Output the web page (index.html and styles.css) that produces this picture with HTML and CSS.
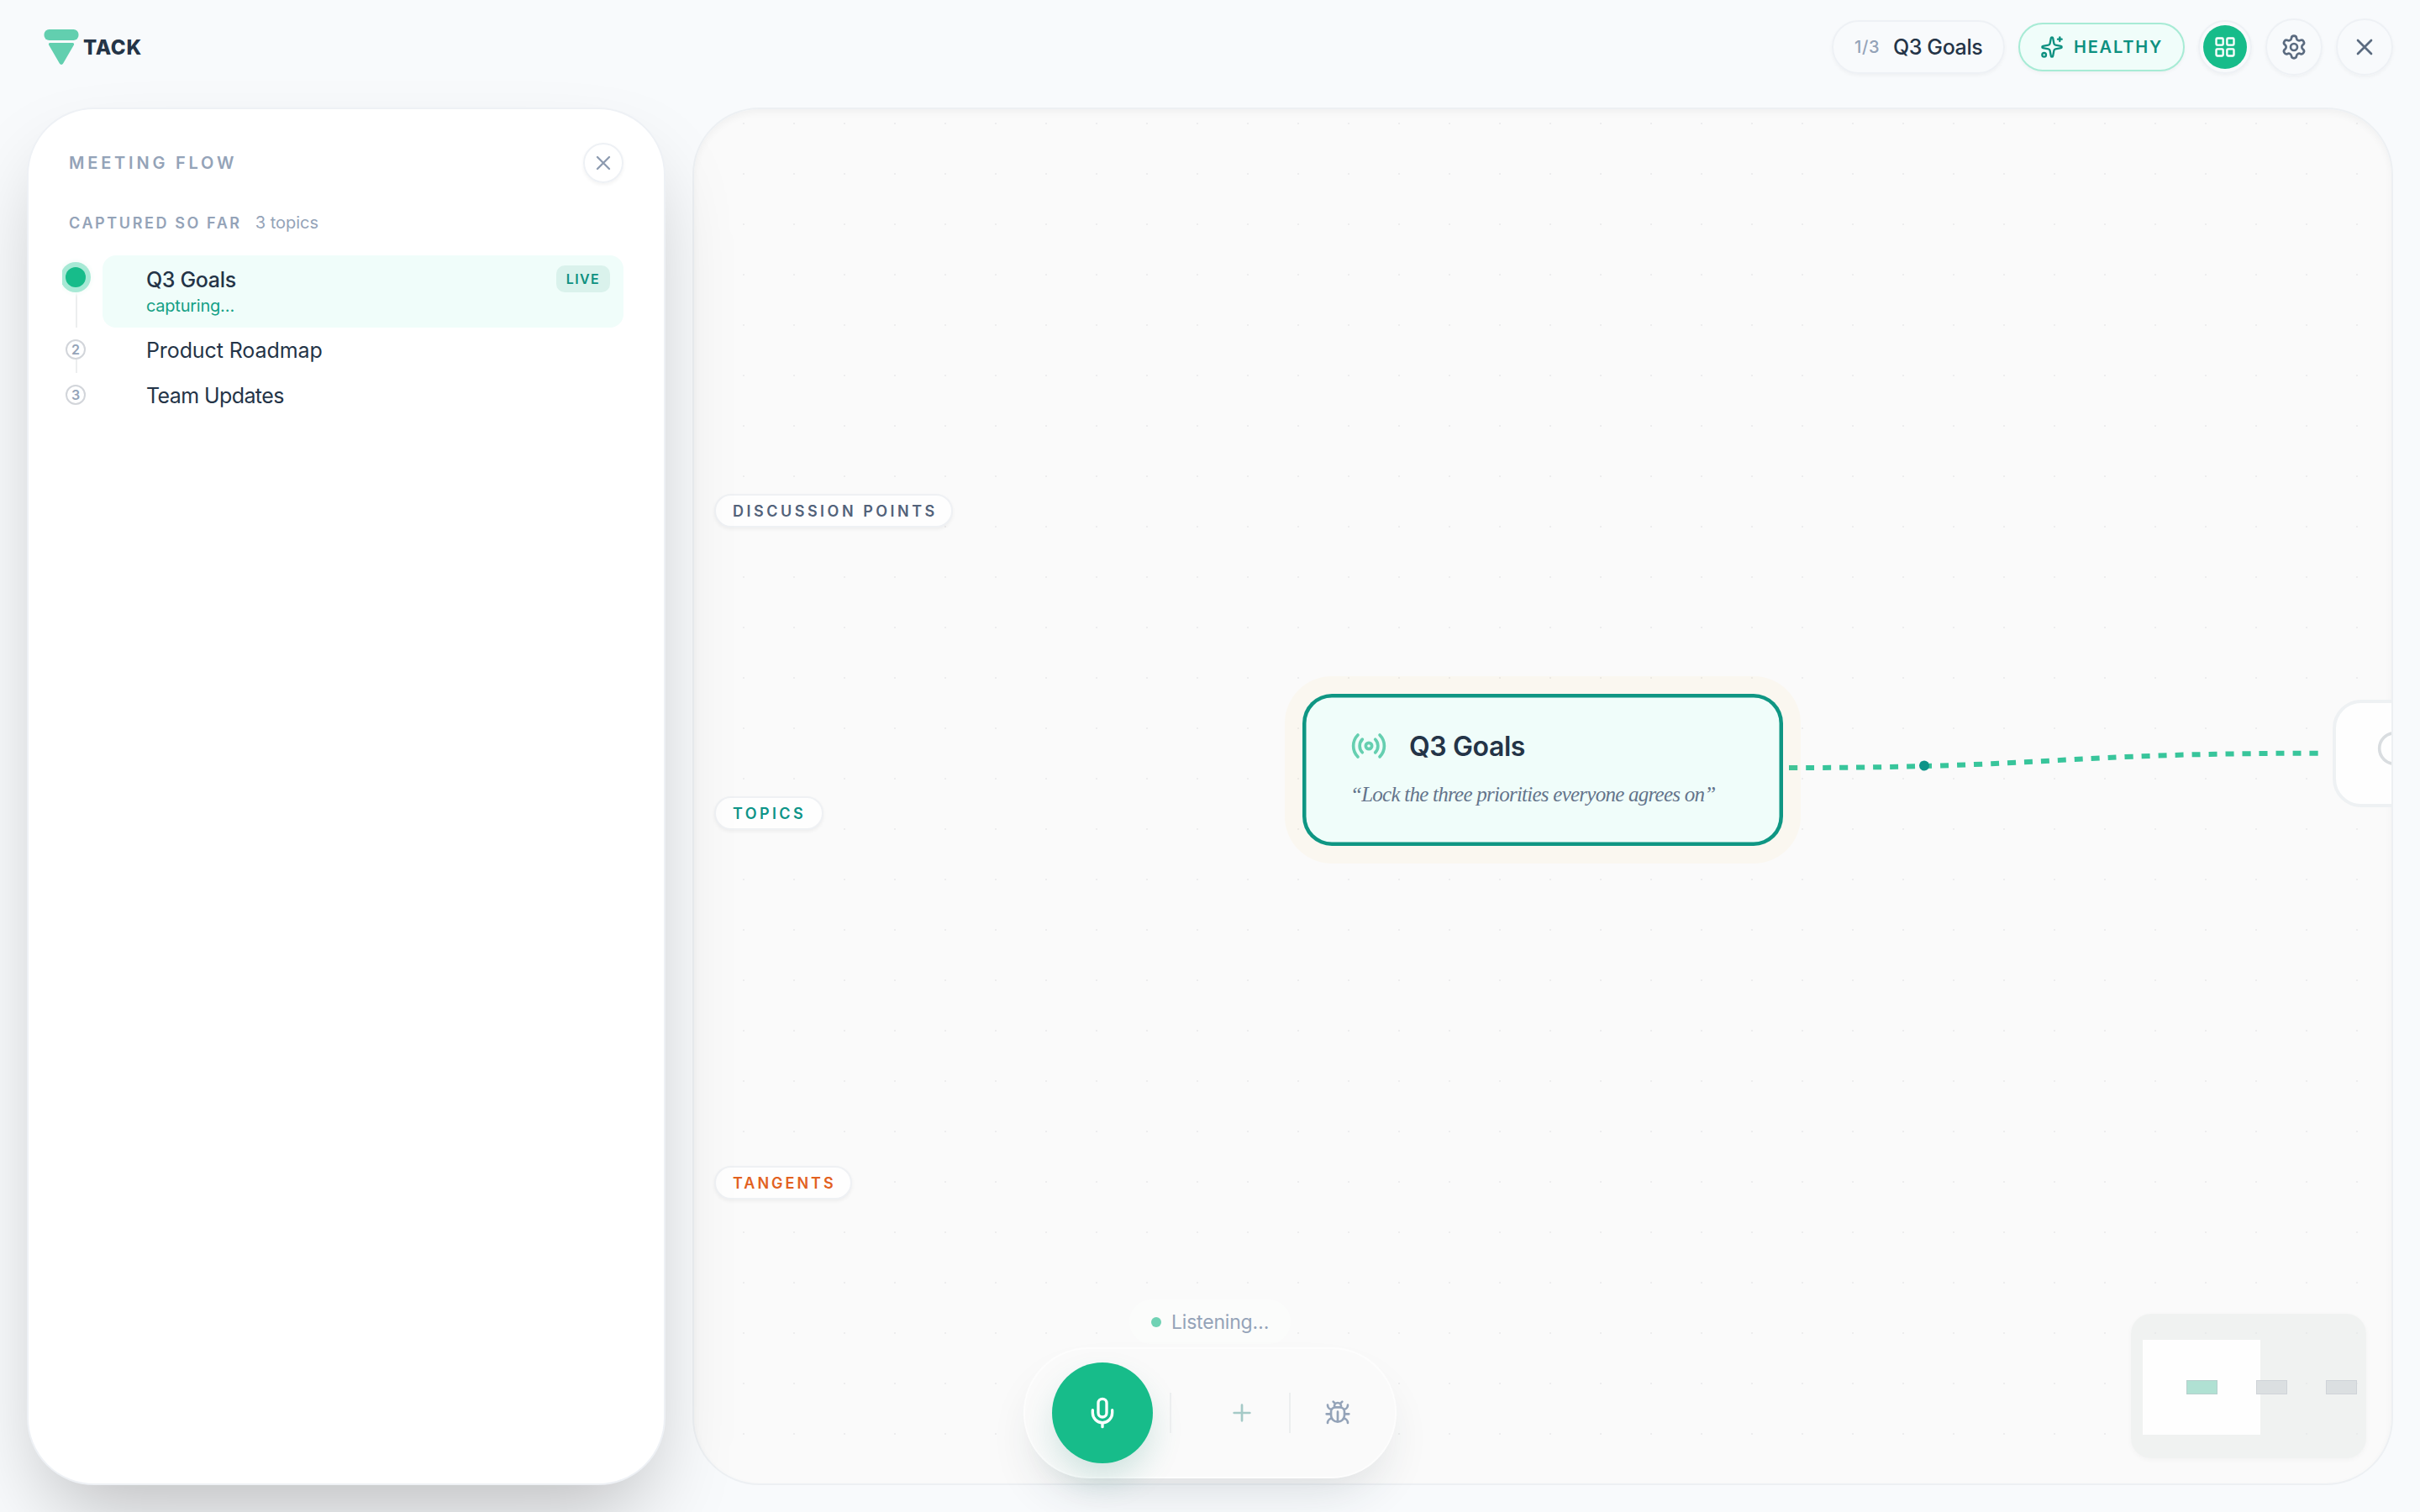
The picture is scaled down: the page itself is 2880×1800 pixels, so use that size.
FILE: index.html
```
<!DOCTYPE html>
<html lang="en">
<head>
  <meta charset="UTF-8">
  <title>Tack</title>
  <link rel="stylesheet" href="styles.css">
</head>
<body>

  <header class="topbar">
    <div class="brand">
      <svg class="brand-mark" viewBox="0 0 42 44">
        <rect x="0.5" y="1" width="41" height="13" rx="6"/>
        <path d="M7.5 17h27a1.6 1.6 0 0 1 1.4 2.4L23 41.8a2.3 2.3 0 0 1-4 0L6.1 19.4A1.6 1.6 0 0 1 7.5 17z"/>
      </svg>
      <span class="brand-name">TACK</span>
    </div>

    <div class="actions">
      <div class="topic-pill">
        <span class="topic-count">1/3</span>
        <span class="topic-name">Q3 Goals</span>
      </div>
      <div class="health-pill">
        <svg class="icon icon-health" viewBox="0 0 24 24">
          <path d="M11.017 2.814a1 1 0 0 1 1.966 0l1.051 5.558a2 2 0 0 0 1.594 1.594l5.558 1.051a1 1 0 0 1 0 1.966l-5.558 1.051a2 2 0 0 0-1.594 1.594l-1.051 5.558a1 1 0 0 1-1.966 0l-1.051-5.558a2 2 0 0 0-1.594-1.594l-5.558-1.051a1 1 0 0 1 0-1.966l5.558-1.051a2 2 0 0 0 1.594-1.594z"/>
          <path d="M20 2v4M22 4h-4"/>
          <circle cx="4" cy="20" r="2"/>
        </svg>
        <span>HEALTHY</span>
      </div>
      <div class="view-toggle">
        <button class="view-btn">
          <svg class="icon icon-grid" viewBox="0 0 24 24">
            <rect x="3" y="3" width="7" height="7" rx="1"/>
            <rect x="14" y="3" width="7" height="7" rx="1"/>
            <rect x="14" y="14" width="7" height="7" rx="1"/>
            <rect x="3" y="14" width="7" height="7" rx="1"/>
          </svg>
        </button>
      </div>
      <button class="round-btn">
        <svg class="icon icon-top" viewBox="0 0 24 24">
          <path d="M9.671 4.136a2.34 2.34 0 0 1 4.659 0 2.34 2.34 0 0 0 3.319 1.915 2.34 2.34 0 0 1 2.33 4.033 2.34 2.34 0 0 0 0 3.831 2.34 2.34 0 0 1-2.33 4.033 2.34 2.34 0 0 0-3.319 1.915 2.34 2.34 0 0 1-4.659 0 2.34 2.34 0 0 0-3.32-1.915 2.34 2.34 0 0 1-2.33-4.033 2.34 2.34 0 0 0 0-3.831A2.34 2.34 0 0 1 6.35 6.051a2.34 2.34 0 0 0 3.319-1.915"/>
          <circle cx="12" cy="12" r="3"/>
        </svg>
      </button>
      <button class="round-btn">
        <svg class="icon icon-top" viewBox="0 0 24 24"><path d="M18 6 6 18M6 6l12 12"/></svg>
      </button>
    </div>
  </header>

  <main class="workspace">
    <aside class="flow-panel">
      <div class="flow-head">
        <h2>MEETING FLOW</h2>
        <button class="flow-close">
          <svg class="icon icon-close" viewBox="0 0 24 24"><path d="M18 6 6 18M6 6l12 12"/></svg>
        </button>
      </div>
      <div class="flow-sub">
        <span class="flow-label">CAPTURED SO FAR</span>
        <span class="flow-count">3 topics</span>
      </div>
      <ol class="flow-list">
        <li class="flow-item active">
          <div class="marker"><span class="dot"></span><span class="line"></span></div>
          <div class="flow-body">
            <div class="flow-text">
              <span class="flow-title">Q3 Goals</span>
              <span class="flow-status">capturing…</span>
            </div>
            <span class="live">LIVE</span>
          </div>
        </li>
        <li class="flow-item">
          <div class="marker"><span class="dot">2</span><span class="line"></span></div>
          <div class="flow-body"><span class="flow-title roadmap">Product Roadmap</span></div>
        </li>
        <li class="flow-item">
          <div class="marker"><span class="dot">3</span></div>
          <div class="flow-body"><span class="flow-title updates">Team Updates</span></div>
        </li>
      </ol>
    </aside>

    <section class="canvas">
      <svg class="edges" viewBox="0 0 2020 1636">
        <path class="edge" d="M1303 784C1619 784 1619 766.7 1933 766.7"/>
        <circle class="edge-dot" cx="1464" cy="781.5" r="6"/>
      </svg>

      <div class="lane lane-points">DISCUSSION POINTS</div>
      <div class="lane lane-topics">TOPICS</div>
      <div class="lane lane-tangents">TANGENTS</div>

      <div class="node node-active">
        <div class="node-head">
          <svg class="icon icon-node" viewBox="0 0 24 24">
            <path d="M4.9 19.1C1 15.2 1 8.8 4.9 4.9M7.8 16.2c-2.3-2.3-2.3-6.1 0-8.5M16.2 7.8c2.3 2.3 2.3 6.1 0 8.5M19.1 4.9C23 8.8 23 15.1 19.1 19"/>
            <circle cx="12" cy="12" r="2"/>
          </svg>
          <h3>Q3 Goals</h3>
        </div>
        <p>“Lock the three priorities everyone agrees on”</p>
      </div>

      <div class="node node-next">
        <svg class="icon icon-node" viewBox="0 0 24 24"><circle cx="12" cy="12" r="10"/></svg>
      </div>

      <svg class="minimap" viewBox="0 0 280 172">
        <rect class="map-view" x="14" y="31" width="140" height="113"/>
        <rect class="map-node current" x="66.5" y="79.5" width="36" height="16"/>
        <rect class="map-node" x="149.5" y="79.5" width="36" height="16"/>
        <rect class="map-node" x="232.5" y="79.5" width="36" height="16"/>
      </svg>
    </section>
  </main>

  <div class="dock-wrap">
    <div class="listening"><span class="pulse"></span>Listening…</div>
    <div class="dock">
      <button class="mic">
        <svg class="icon icon-mic" viewBox="0 0 24 24">
          <path d="M12 19v3M19 10v2a7 7 0 0 1-14 0v-2"/>
          <rect x="9" y="2" width="6" height="13" rx="3"/>
        </svg>
      </button>
      <span class="sep"></span>
      <button class="tool tool-add">
        <svg class="icon icon-tool" viewBox="0 0 24 24"><path d="M5 12h14M12 5v14"/></svg>
      </button>
      <span class="sep"></span>
      <button class="tool tool-bug">
        <svg class="icon icon-tool" viewBox="0 0 24 24">
          <path d="M12 20v-9M14 7a4 4 0 0 1 4 4v3a6 6 0 0 1-12 0v-3a4 4 0 0 1 4-4zM14.12 3.88 16 2M21 21a4 4 0 0 0-3.81-4M21 5a4 4 0 0 1-3.55 3.97M22 13h-4M3 21a4 4 0 0 1 3.81-4M3 5a4 4 0 0 0 3.55 3.97M6 13H2M8 2l1.88 1.88M9 7.13V6a3 3 0 1 1 6 0v1.13"/>
        </svg>
      </button>
    </div>
  </div>

</body>
</html>
```
FILE: styles.css
```
* {
  box-sizing: border-box;
}

body {
  margin: 0;
  width: 2880px;
  height: 1800px;
  overflow: hidden;
  background: #f8fafc;
  color: #243447;
  font-family: Inter, "Liberation Sans", sans-serif;
}

button {
  display: flex;
  align-items: center;
  justify-content: center;
  padding: 0;
  border: none;
  background: none;
}

h2,
h3,
p {
  margin: 0;
}

.icon {
  display: block;
  flex: none;
  fill: none;
  stroke: currentColor;
  stroke-width: 2;
  stroke-linecap: round;
  stroke-linejoin: round;
}

/* top bar */

.topbar {
  display: flex;
  align-items: center;
  justify-content: space-between;
  height: 112px;
  padding: 0 32px 0 52px;
}

.brand {
  display: flex;
  align-items: center;
  gap: 5px;
}

.brand-mark {
  width: 42px;
  height: 44px;
  fill: #62cfaf;
}

.brand-name {
  font-size: 24px;
  font-weight: 800;
  letter-spacing: 0.7px;
}

.actions {
  display: flex;
  align-items: center;
  gap: 16px;
}

.topic-pill {
  display: flex;
  align-items: center;
  gap: 16px;
  width: 206px;
  height: 64px;
  padding-left: 25px;
  border: 2px solid #eef1f5;
  border-radius: 32px;
  box-shadow: 0 2px 4px rgba(0, 0, 0, 0.04);
  white-space: nowrap;
}

.topic-count {
  width: 30px;
  color: #94a3b8;
  font-size: 20px;
  font-weight: 500;
  letter-spacing: 0.6px;
}

.topic-name {
  font-size: 25px;
  font-weight: 500;
  letter-spacing: -0.4px;
}

.health-pill {
  display: flex;
  align-items: center;
  gap: 12px;
  width: 198px;
  height: 58px;
  padding-left: 24px;
  border: 2px solid #a7ebd5;
  border-radius: 29px;
  background: #f0fdfa;
  box-shadow: 0 2px 4px rgba(0, 0, 0, 0.04);
  color: #0d9080;
  font-size: 20px;
  font-weight: 600;
  letter-spacing: 1.8px;
}

.icon-health {
  width: 28px;
  height: 28px;
}

.view-toggle {
  width: 64px;
  height: 64px;
  padding: 4px;
  border: 2px solid #eef1f5;
  border-radius: 50%;
  box-shadow: 0 2px 4px rgba(0, 0, 0, 0.04);
}

.view-btn {
  width: 52px;
  height: 52px;
  border-radius: 50%;
  background: #17bc8a;
  color: #fff;
}

.icon-grid {
  width: 28px;
  height: 28px;
}

.round-btn {
  width: 68px;
  height: 68px;
  border: 2px solid #eef1f5;
  border-radius: 50%;
  box-shadow: 0 2px 4px rgba(0, 0, 0, 0.04);
  color: #5b6b80;
}

.icon-top {
  width: 32px;
  height: 32px;
}

/* workspace */

.workspace {
  display: grid;
  grid-template-columns: 760px 1fr;
  gap: 32px;
  height: 1656px;
  padding: 16px 32px 0;
}

.flow-panel {
  z-index: 1;
  padding: 40px 48px;
  border: 2px solid #eef1f5;
  border-radius: 80px;
  background: #fff;
  box-shadow: 0 50px 100px -24px rgba(0, 0, 0, 0.25);
}

.flow-head {
  display: flex;
  align-items: center;
  justify-content: space-between;
  height: 48px;
}

.flow-head h2 {
  color: #94a3b8;
  font-size: 20px;
  font-weight: 600;
  letter-spacing: 3.8px;
}

.flow-close {
  width: 48px;
  height: 48px;
  border: 2px solid #eef1f5;
  border-radius: 50%;
  box-shadow: 0 2px 4px rgba(0, 0, 0, 0.05);
  color: #8d9bb0;
}

.icon-close {
  width: 28px;
  height: 28px;
}

.flow-sub {
  display: flex;
  align-items: center;
  gap: 16px;
  height: 24px;
  margin-top: 35px;
}

.flow-label {
  color: #94a3b8;
  font-size: 18px;
  font-weight: 600;
  letter-spacing: 2.6px;
}

.flow-count {
  color: #94a3b8;
  font-size: 20px;
}

.flow-list {
  margin: 27px 0 0 -8px;
  padding: 0;
  overflow: hidden;
  list-style: none;
}

.flow-item {
  display: grid;
  grid-template-columns: 32px 1fr;
  gap: 16px;
  height: 54px;
}

.flow-item.active {
  height: 86px;
}

.marker {
  display: flex;
  flex-direction: column;
  align-items: center;
  padding-top: 14px;
}

.dot {
  z-index: 1;
  display: flex;
  align-items: center;
  justify-content: center;
  width: 24px;
  height: 24px;
  border: 2px solid #d2d5da;
  border-radius: 50%;
  color: #94a3b8;
  font-size: 16px;
  font-weight: 600;
}

.active .dot {
  border: none;
  background: #17bc8a;
  box-shadow: 0 0 0 6px #a7e9d5, 0 0 4px 9px #f8fdfb;
}

.line {
  flex: 1;
  width: 2px;
  margin-left: 2px;
  background: #eceeef;
}

.flow-body {
  display: flex;
  align-items: center;
  padding-left: 52px;
}

.active .flow-body {
  align-items: flex-start;
  justify-content: space-between;
  padding: 12px 16px 0 52px;
  border-radius: 16px;
  background: #f0fdfa;
}

.flow-text {
  display: flex;
  flex-direction: column;
}

.flow-title {
  font-size: 25px;
  line-height: 34px;
  letter-spacing: -0.2px;
}

.active .flow-title {
  font-weight: 500;
  letter-spacing: -0.35px;
}

.roadmap {
  letter-spacing: -0.1px;
}

.updates {
  letter-spacing: -0.6px;
}

.flow-status {
  color: #14a085;
  font-size: 20px;
  line-height: 29px;
  letter-spacing: -0.25px;
}

.live {
  display: flex;
  align-items: center;
  justify-content: center;
  width: 64px;
  height: 32px;
  border-radius: 10px;
  background: #daf2ec;
  color: #0d9080;
  font-size: 16px;
  font-weight: 600;
  letter-spacing: 1.4px;
}

/* canvas */

.canvas {
  position: relative;
  overflow: hidden;
  border: 2px solid #edf0f3;
  border-radius: 80px;
  background-color: #fafafa;
  background-image: radial-gradient(circle, #ededee 1.2px, transparent 1.3px);
  background-size: 60px 60px;
  background-position: 29px -13px;
  box-shadow: inset 0 4px 8px rgba(0, 0, 0, 0.04);
}

.edges {
  position: absolute;
  inset: 0;
  width: 2020px;
  height: 1636px;
}

.edge {
  fill: none;
  stroke: #17bc8a;
  stroke-width: 6;
  stroke-dasharray: 10 10;
  opacity: 0.86;
}

.edge-dot {
  fill: #0d9488;
}

.lane {
  position: absolute;
  left: 24px;
  display: flex;
  align-items: center;
  height: 40px;
  padding-left: 20px;
  border: 2px solid #eff1f4;
  border-radius: 20px;
  background: #fefefe;
  box-shadow: 0 2px 4px rgba(0, 0, 0, 0.05);
  font-size: 18px;
  font-weight: 600;
  white-space: nowrap;
}

.lane-points {
  top: 458px;
  width: 284px;
  color: #52627a;
  letter-spacing: 3.5px;
}

.lane-topics {
  top: 818px;
  width: 130px;
  color: #0d9488;
  letter-spacing: 3.4px;
}

.lane-tangents {
  top: 1258px;
  width: 164px;
  color: #e2611f;
  letter-spacing: 3px;
}

.node {
  position: absolute;
}

.node-active {
  left: 724px;
  top: 696px;
  width: 572px;
  height: 181px;
  padding: 40px 0 0 57px;
  border-radius: 35px;
  background: #f0fdfa;
  box-shadow: inset 0 0 0 4.5px #0f9683, 0 0 0 21px rgba(251, 200, 60, 0.05);
}

.node-head {
  display: flex;
  align-items: center;
  gap: 26px;
  height: 44px;
}

.icon-node {
  width: 44px;
  height: 44px;
  color: #65cfb0;
}

.node-head h3 {
  font-size: 32px;
  font-weight: 600;
  letter-spacing: -0.4px;
}

.node-active p {
  margin-top: 19px;
  color: #64748b;
  font-family: "Liberation Serif", serif;
  font-size: 25px;
  font-style: italic;
  line-height: 34px;
  letter-spacing: -0.75px;
  white-space: nowrap;
}

.node-next {
  left: 1950px;
  top: 703px;
  width: 400px;
  height: 128px;
  padding: 32px 0 0 48px;
  border: 4px solid #eef1f3;
  border-radius: 34px;
  background: #fefefe;
}

.node-next .icon-node {
  color: #d9dde0;
}

.minimap {
  position: absolute;
  left: 1710px;
  top: 1434px;
  width: 280px;
  height: 172px;
  border-radius: 24px;
  background: rgba(228, 232, 231, 0.45);
  box-shadow: 0 2px 6px rgba(0, 0, 0, 0.03);
}

.map-view {
  fill: #fefefe;
}

.map-node {
  fill: #dbdfe1;
  stroke: #cfd3d8;
}

.map-node.current {
  fill: #b0e1d3;
  stroke: #b5cfcc;
}

/* dock */

.dock-wrap {
  position: fixed;
  left: 0;
  right: 0;
  bottom: 40px;
  z-index: 2;
  display: flex;
  flex-direction: column;
  align-items: center;
  gap: 4px;
}

.listening {
  display: flex;
  align-items: center;
  gap: 12px;
  width: 192px;
  height: 53px;
  padding-left: 26px;
  border-radius: 27px;
  background: #fbfcfb;
  color: #94a3b8;
  font-size: 23px;
  letter-spacing: -0.2px;
}

.pulse {
  width: 12px;
  height: 12px;
  border-radius: 50%;
  background: #70d2b4;
}

.dock {
  display: flex;
  align-items: center;
  width: 444px;
  height: 156px;
  padding-left: 32px;
  border: 2px solid #fdfdfd;
  border-radius: 78px;
  background: #fafafa;
  box-shadow: 0 30px 60px -20px rgba(30, 50, 60, 0.16);
}

.mic {
  width: 120px;
  height: 120px;
  margin-right: 20px;
  border-radius: 50%;
  background: #17bc8a;
  box-shadow: 0 20px 40px -4px rgba(20, 130, 110, 0.2);
  color: #fff;
}

.icon-mic {
  width: 40px;
  height: 40px;
}

.sep {
  width: 2px;
  height: 48px;
  background: #eceeef;
}

.tool {
  width: 80px;
  height: 80px;
}

.icon-tool {
  width: 32px;
  height: 32px;
}

.tool-add {
  margin: 0 16px 0 44px;
  color: #a5cac7;
}

.tool-bug {
  margin-left: 16px;
  color: #94a3b8;
}
```
